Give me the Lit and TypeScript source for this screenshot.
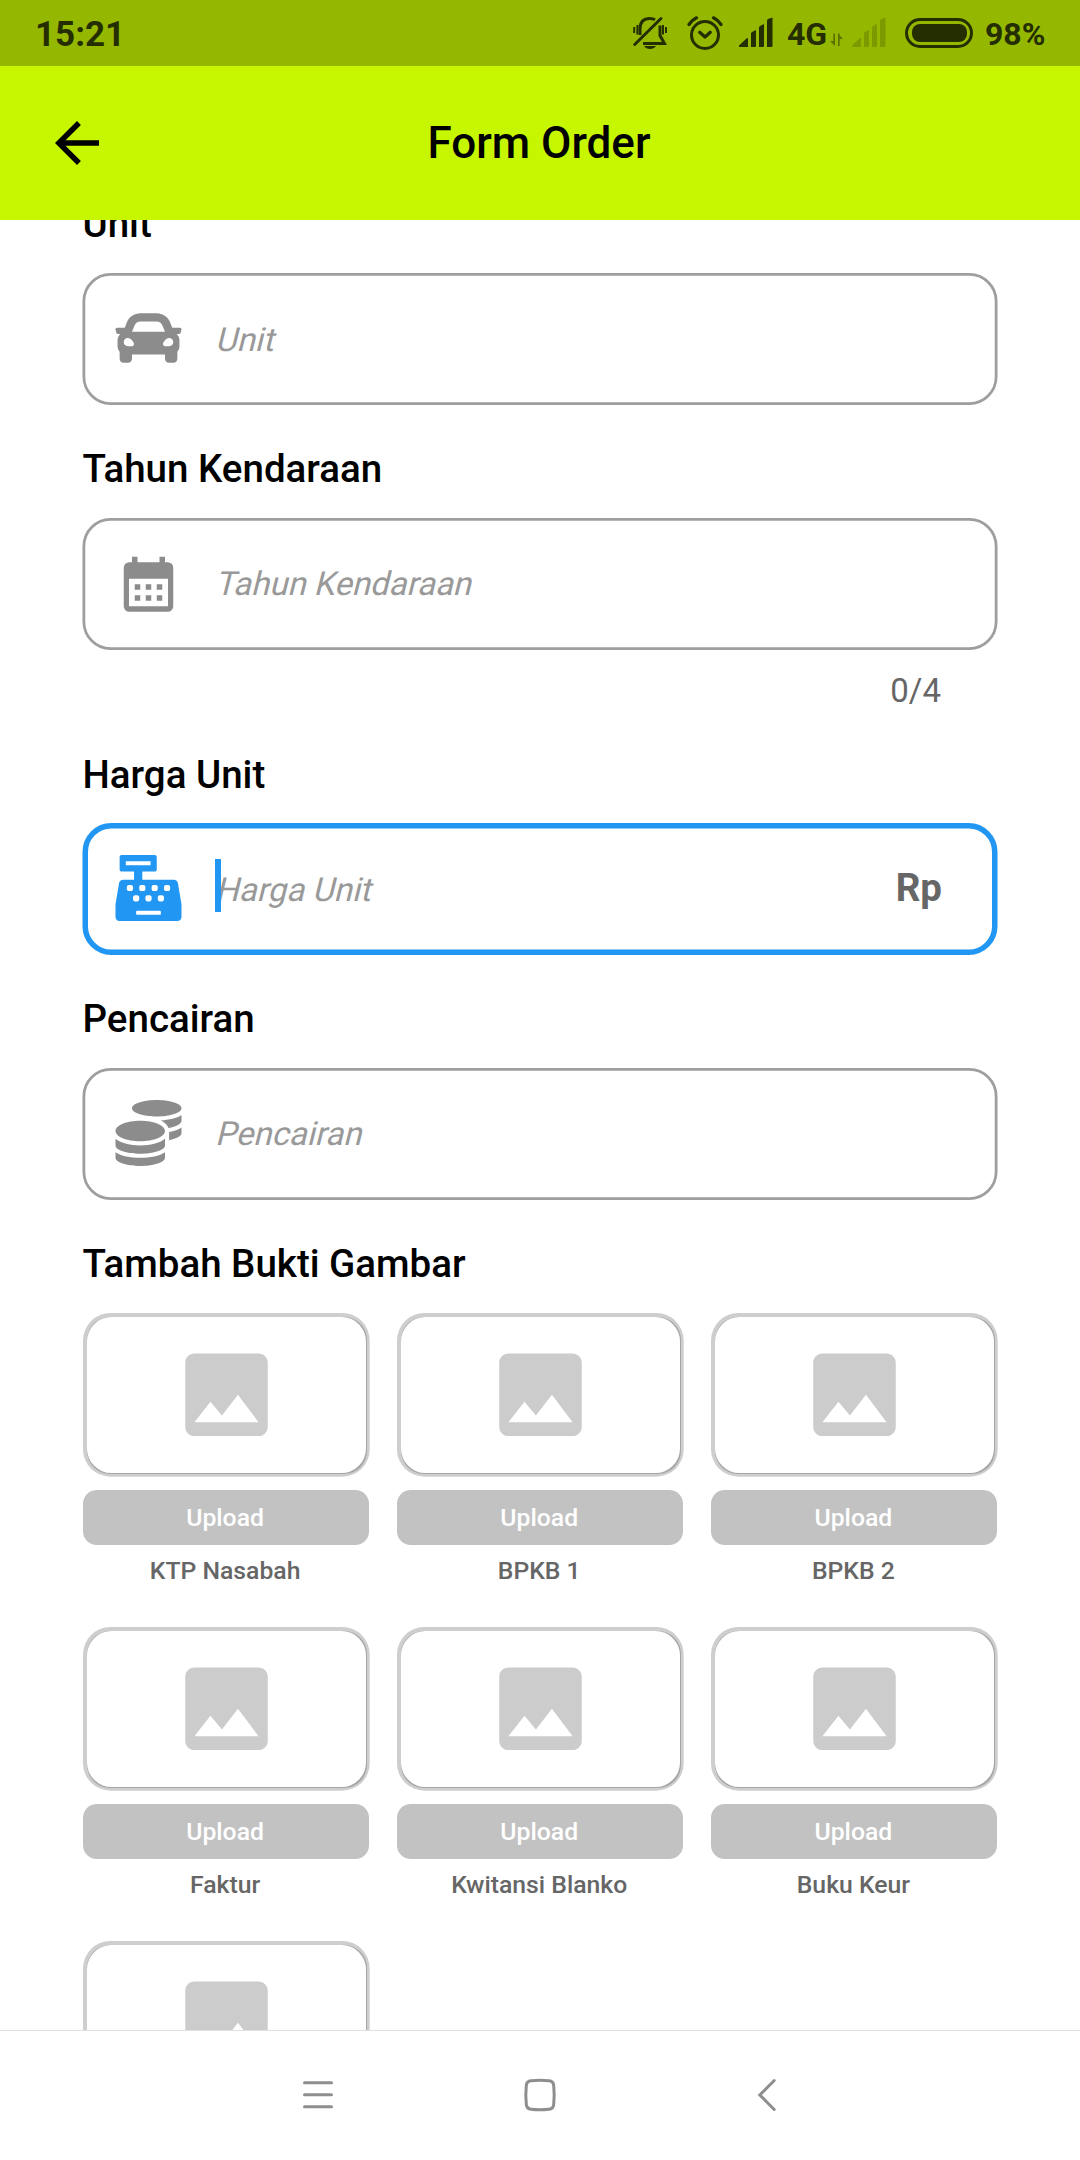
import { LitElement, html, svg, css, nothing } from "lit";
import { customElement, property } from "lit/decorators.js";
import { classMap } from "lit/directives/class-map.js";

const CAR =
  "M499.99 176h-59.87l-16.64-41.6C406.38 91.63 365.57 64 319.5 64h-127c-46.06 0-86.88 27.63-103.99 70.4L71.87 176H12.01C4.2 176-1.53 183.34.37 190.91l6 24C7.7 220.25 12.5 224 18.01 224h20.07C24.65 235.73 16 252.78 16 272v48c0 16.12 6.16 30.67 16 41.93V416c0 17.67 14.33 32 32 32h32c17.67 0 32-14.33 32-32v-32h256v32c0 17.67 14.33 32 32 32h32c17.67 0 32-14.33 32-32v-54.07c9.84-11.25 16-25.8 16-41.93v-48c0-19.22-8.65-36.27-22.07-48H494c5.51 0 10.31-3.75 11.64-9.09l6-24c1.89-7.57-3.84-14.91-11.65-14.91zm-352.06-17.83c7.29-18.22 24.94-30.17 44.57-30.17h127c19.63 0 37.28 11.95 44.57 30.17L384 208H128l19.93-49.83zM96 319.8c-19.2 0-32-12.76-32-31.9S76.8 256 96 256s48 28.71 48 47.85-28.8 15.95-48 15.95zm320 0c-19.2 0-48 3.19-48-15.95S396.8 256 416 256s32 12.76 32 31.9-12.8 31.9-32 31.9z";
const CALENDAR =
  "M9 11v2H7v-2h2M13 11v2h-2v-2h2M17 11v2h-2v-2h2M19 3a2 2 0 0 1 2 2V19a2 2 0 0 1-2 2H5a2 2 0 0 1-2-2V5a2 2 0 0 1 2-2H6V1H8V3H16V1H18V3H19M19.1 19V9H4.9V19H19.1M9 15v2H7v-2h2M13 15v2h-2v-2h2M17 15v2h-2v-2h2Z";
const REGISTER =
  "M511.1 378.8l-26.7-160c-2.6-15.4-15.9-26.7-31.6-26.7H208v-64h96c8.8 0 16-7.2 16-16V16c0-8.8-7.2-16-16-16H48c-8.8 0-16 7.2-16 16v96c0 8.8 7.2 16 16 16h96v64H59.1c-15.6 0-29 11.3-31.6 26.7L.8 378.7c-.6 3.5-.9 7-.9 10.5V480c0 17.7 14.3 32 32 32h448c17.7 0 32-14.3 32-32v-90.7c.1-3.5-.2-7-.8-10.5zM280 248c0-8.8 7.2-16 16-16h16c8.8 0 16 7.2 16 16v16c0 8.8-7.2 16-16 16h-16c-8.8 0-16-7.2-16-16v-16zm-32 64h16c8.8 0 16 7.2 16 16v16c0 8.8-7.2 16-16 16h-16c-8.8 0-16-7.2-16-16v-16c0-8.8 7.2-16 16-16zm-32-80c8.8 0 16 7.2 16 16v16c0 8.8-7.2 16-16 16h-16c-8.8 0-16-7.2-16-16v-16c0-8.8 7.2-16 16-16h16zM80 80V48h192v32H80zm40 200h-16c-8.8 0-16-7.2-16-16v-16c0-8.8 7.2-16 16-16h16c8.8 0 16 7.2 16 16v16c0 8.8-7.2 16-16 16zm16 64v-16c0-8.8 7.2-16 16-16h16c8.8 0 16 7.2 16 16v16c0 8.8-7.2 16-16 16h-16c-8.8 0-16-7.2-16-16zm216 112c0 4.4-3.6 8-8 8H168c-4.4 0-8-3.6-8-8v-16c0-4.4 3.6-8 8-8h176c4.4 0 8 3.6 8 8v16zm24-112c0 8.8-7.2 16-16 16h-16c-8.8 0-16-7.2-16-16v-16c0-8.8 7.2-16 16-16h16c8.8 0 16 7.2 16 16v16zm48-80c0 8.8-7.2 16-16 16h-16c-8.8 0-16-7.2-16-16v-16c0-8.8 7.2-16 16-16h16c8.8 0 16 7.2 16 16v16z";
const COINS =
  "M0 405.3V448c0 35.3 86 64 192 64s192-28.7 192-64v-42.7C342.7 434.4 267.2 448 192 448S41.3 434.4 0 405.3zM320 128c106 0 192-28.7 192-64S426 0 320 0 128 28.7 128 64s86 64 192 64zM0 300.4V352c0 35.3 86 64 192 64s192-28.7 192-64v-51.6c-41.3 34-116.9 51.6-192 51.6S41.3 334.4 0 300.4zm416 11c57.3-11.1 96-31.7 96-55.4v-42.7c-23.2 16.4-57.3 27.6-96 34.5v63.6zM192 160C86 160 0 195.8 0 240s86 80 192 80 192-35.8 192-80-86-80-192-80zm219.3 56.3c60-10.8 100.7-32 100.7-56.3v-42.7c-35.5 25.1-96.5 38.6-160.7 41.8 29.5 14.3 51.2 33.5 60 57.2z";

@customElement("status-bar")
export class StatusBar extends LitElement {
  static styles = css`
    :host {
      display: flex;
      height: 66px;
      box-sizing: border-box;
      padding-left: 35px;
      background: #94b800;
      color: #252e00;
      font: 700 32px/68px Roboto, sans-serif;
    }
    .clock {
      flex: 1;
      font-size: 35px;
      line-height: 69px;
    }
    .icon {
      display: block;
      height: 66px;
      flex: none;
    }
    .network {
      width: 39px;
      margin-left: 14px;
    }
    .percent {
      width: 95px;
      margin-left: 12px;
    }
    .alarm {
      margin-left: 20px;
    }
    .signal {
      margin-left: 16px;
    }
    .data {
      margin-left: 4px;
      opacity: 0.5;
    }
    .faint {
      margin-left: 8px;
      opacity: 0.21;
    }
    .battery {
      margin-left: 19px;
    }
  `;

  private bars(cls: string) {
    return html`<svg class="icon ${cls}" width="34" height="66" fill="currentColor">
      <path d="M0 47v-1.500L7.500 38.500Q9 37.500 9 39V47zM12 47V33.500q0-1 1-1.500l4-2V46q0 1-1 1zM20 47V27.500q0-1 1-1.500l4-2V46q0 1-1 1zM28 47V21q0-1.500 1-2l4.500-1.500V46q0 1-1 1z" />
    </svg>`;
  }

  render() {
    return html`
      <span class="clock">15:21</span>
      <svg class="icon" width="35" height="66" fill="none" stroke="currentColor" stroke-width="2.6">
        <path d="M2.700 44.500L29 18.500" stroke-width="3" stroke-linecap="round" />
        <path d="M8 35V29q0-10.500 10-10.500q3 0 5 1.300M28 25.500v10l4.500 8H11" stroke-width="3" />
        <path d="M2.200 27v6M5.400 25v9.500M31 25v9.500M34 27v6" stroke-width="2" />
        <path d="M12 46h12q-2 3-6 3t-6-3z" fill="currentColor" stroke="none" />
      </svg>
      <svg class="icon alarm" width="36" height="66" fill="none" stroke="currentColor" stroke-width="3" stroke-linecap="round" stroke-linejoin="round">
        <circle cx="18" cy="35" r="13.500" />
        <path d="M2 24.500q3-4.500 7.500-6.700M34 24.500q-3-4.500-7.500-6.700" stroke-width="3.200" />
        <path d="M12.700 32.300L18 37l5.300-4.700" stroke-width="3.200" />
      </svg>
      ${this.bars("signal")}
      <span class="network">4G</span>
      <svg class="icon data" width="14" height="66" fill="currentColor">
        <path d="M5 33.500h-1.700V41H0l5 5zM8 33.500h1.700V46H8zM8 33.500l5 5.500H9.700z" />
      </svg>
      ${this.bars("faint")}
      <svg class="icon battery" width="68" height="66">
        <rect x="1.500" y="19.500" width="65" height="27" rx="13.500" fill="none" stroke="currentColor" stroke-width="3" />
        <rect x="7" y="24" width="55" height="18" rx="8" fill="currentColor" />
      </svg>
      <span class="percent">98%</span>
    `;
  }
}

@customElement("form-field")
export class FormField extends LitElement {
  @property() label = "";
  @property() icon = "";
  @property({ type: Number }) grid = 512;
  @property({ type: Boolean }) focused = false;
  @property({ type: Boolean }) lowered = false;
  @property() suffix = "";
  @property() counter = "";

  static styles = css`
    :host {
      display: block;
      font-family: Roboto, sans-serif;
    }
    .label {
      font-weight: 500;
      font-size: 38.5px;
      line-height: 44px;
      margin-bottom: 27px;
      padding-left: 0.5px;
      color: #000;
    }
    .low {
      padding-top: 1px;
      margin-bottom: 26px;
    }
    .box {
      position: relative;
      display: flex;
      align-items: center;
      height: 132px;
      box-sizing: border-box;
      padding: 0 56px 0 33px;
      color: #8c8c8c;
    }
    .focused {
      color: #2196f3;
    }
    .outline {
      position: absolute;
      left: 0;
      top: 0;
      fill: none;
      stroke: #9e9e9e;
      stroke-width: 2.75;
    }
    .focused .outline {
      stroke: #2196f3;
      stroke-width: 5.5;
    }
    .icon {
      width: 67px;
      height: 66px;
      margin-top: -2px;
    }
    .tall {
      margin-top: 6px;
    }
    /* Upright letters slanted about their baseline */
    .hint {
      flex: 1;
      margin-left: 32.5px;
      font-size: 33px;
      line-height: 54px;
      transform: skewX(-14deg);
      transform-origin: 0 38px;
      color: #999;
    }
    .lowered {
      margin-top: 2px;
    }
    .caret {
      position: absolute;
      left: 133px;
      top: 36px;
      width: 6px;
      height: 53px;
      background: #2196f3;
    }
    .suffix {
      font-weight: 700;
      font-size: 38.5px;
      line-height: 44px;
      margin-top: -2px;
      color: #666;
    }
    .counter {
      margin: 21px 57px -1px 0;
      text-align: right;
      font-size: 33px;
      line-height: 40px;
      color: #666;
    }
  `;

  render() {
    const inset = this.focused ? 2.75 : 1.375;
    return html`
      <div class=${classMap({ label: true, low: this.focused })}>${this.label}</div>
      <div class=${classMap({ box: true, focused: this.focused })}>
        <svg class="outline" width="916" height="132">
          <rect x=${0.5 + inset} y=${inset} width=${915 - 2 * inset} height=${132 - 2 * inset} rx=${27.5 - inset / 2} />
        </svg>
        <svg class=${classMap({ icon: true, tall: this.grid === 24 })} viewBox="0 0 67 66" fill="currentColor">
          <path transform="translate(.5 0) scale(${66 / this.grid})" fill-rule="evenodd" d=${this.icon} />
        </svg>
        <span class=${classMap({ hint: true, lowered: this.lowered })}>${this.label}</span>
        ${this.focused ? html`<span class="caret"></span>` : nothing}
        ${this.suffix ? html`<span class="suffix">${this.suffix}</span>` : nothing}
      </div>
      ${this.counter ? html`<div class="counter">${this.counter}</div>` : nothing}
    `;
  }
}

@customElement("upload-tile")
export class UploadTile extends LitElement {
  @property() name = "";

  static styles = css`
    :host {
      display: flex;
      flex-direction: column;
      font: 500 24.75px/30px Roboto, sans-serif;
      text-align: center;
    }
    .frame {
      display: block;
      width: 287px;
      height: 164px;
    }
    .button {
      margin-top: 13.4px;
      height: 55px;
      line-height: 56px;
      box-sizing: border-box;
      padding-right: 1.5px;
      border-radius: 13.75px;
      background: #c2c2c2;
      color: #fff;
    }
    .name {
      margin-top: 10.8px;
      padding-right: 1.5px;
      color: #666;
    }
  `;

  render() {
    return html`
      <svg class="frame" viewBox="0 0 287 164">
        <rect width="286.700" height="163.700" rx="27.500" fill="#cecece" />
        <rect x="4" y="4" width="280" height="157" rx="23" fill="#a6a6a6" />
        <rect x="4" y="4" width="279" height="156" rx="24.500" fill="#fff" />
        ${svg`<path transform="translate(88.500 26.800) scale(4.5833)" fill="#ccc" d="M21 19V5c0-1.100-.9-2-2-2H5c-1.100 0-2 .9-2 2v14c0 1.100.9 2 2 2h14c1.100 0 2-.9 2-2zM8.500 13.500l2.500 3.010L14.500 12l4.500 6H5l3.500-4.500z" />`}
      </svg>
      <div class="button">Upload</div>
      ${this.name ? html`<div class="name">${this.name}</div>` : nothing}
    `;
  }
}

@customElement("app-root")
export class AppRoot extends LitElement {
  private uploads = ["KTP Nasabah", "BPKB 1", "BPKB 2", "Faktur", "Kwitansi Blanko", "Buku Keur", ""];

  static styles = css`
    :host {
      display: flex;
      flex-direction: column;
      width: 1080px;
      height: 2160px;
      overflow: hidden;
      background: #fff;
      font-family: Roboto, sans-serif;
    }
    .appbar {
      display: grid;
      grid-template-columns: 66px 1fr 66px;
      align-items: center;
      height: 154px;
      flex: none;
      box-sizing: border-box;
      padding: 0 44px;
      background: #c6f700;
    }
    .back {
      width: 66px;
      height: 66px;
    }
    .title {
      text-align: center;
      padding-right: 2px;
      font-weight: 500;
      font-size: 44px;
      line-height: 52px;
      color: #000;
    }
    .body {
      flex: 1;
      min-height: 0;
      overflow: hidden;
      box-sizing: border-box;
      padding: 0 82px;
    }
    .form {
      display: flex;
      flex-direction: column;
      gap: 42px;
      margin-top: -18px;
    }
    .heading {
      font-weight: 500;
      font-size: 38.5px;
      line-height: 44px;
      margin-bottom: 27px;
      padding-left: 0.5px;
      color: #000;
    }
    .grid {
      display: grid;
      grid-template-columns: repeat(3, 286.67px);
      grid-auto-rows: 314px;
      column-gap: 27.5px;
      padding-left: 0.5px;
    }
    .nav {
      display: flex;
      flex: none;
      height: 130px;
      box-sizing: border-box;
      border-top: 1px solid #e0e0e0;
      justify-content: center;
      align-items: center;
      gap: 182px;
      fill: none;
      stroke: #8e8e8e;
      stroke-width: 3;
      stroke-linecap: round;
    }
    .key {
      width: 44px;
      height: 44px;
    }
  `;

  render() {
    return html`
      <status-bar></status-bar>
      <header class="appbar">
        <svg class="back" viewBox="0 0 24 24">
          <path d="M20 11H7.830l5.590-5.590L12 4l-8 8 8 8 1.410-1.410L7.830 13H20v-2z" />
        </svg>
        <span class="title">Form Order</span>
      </header>
      <main class="body">
        <div class="form">
          <form-field label="Unit" .icon=${CAR} lowered></form-field>
          <form-field label="Tahun Kendaraan" .icon=${CALENDAR} .grid=${24} counter="0/4"></form-field>
          <form-field label="Harga Unit" .icon=${REGISTER} focused lowered suffix="Rp"></form-field>
          <form-field label="Pencairan" .icon=${COINS}></form-field>
          <section>
            <div class="heading">Tambah Bukti Gambar</div>
            <div class="grid">${this.uploads.map((n) => html`<upload-tile .name=${n}></upload-tile>`)}</div>
          </section>
        </div>
      </main>
      <nav class="nav">
        <svg class="key" viewBox="0 0 44 44"><path d="M12.500 8.700h27M12.500 20.700h27M12.500 32.700h27" /></svg>
        <svg class="key" viewBox="0 0 44 44">
          <path transform="translate(0 -1)" d="M13 7.800Q22 6.800 31 7.800Q35.300 8.200 35.700 12.500Q36.700 22 35.700 31.500Q35.300 35.800 31 36.200Q22 37.200 13 36.200Q8.700 35.800 8.300 31.500Q7.300 22 8.300 12.500Q8.700 8.200 13 7.800z" />
        </svg>
        <svg class="key" viewBox="0 0 44 44"><path d="M30.200 6.500L15.800 21l14.400 14.500" /></svg>
      </nav>
    `;
  }
}
